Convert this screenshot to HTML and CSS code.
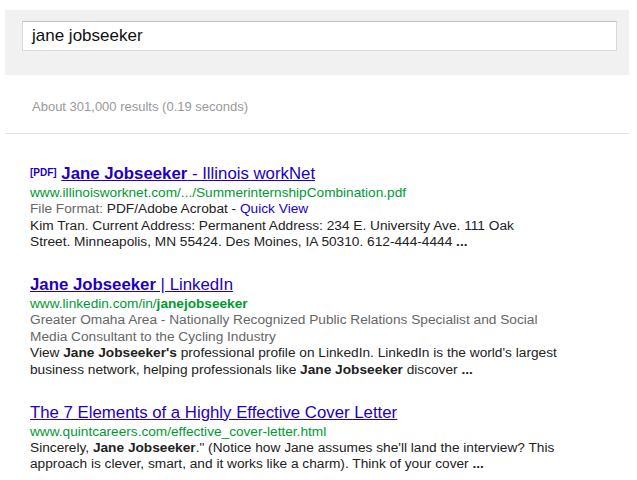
FILE: index.html
```html
<!DOCTYPE html>
<html>
<head>
<meta charset="utf-8">
<link rel="stylesheet" href="styles.css">
</head>
<body>
<div class="page">
  <div class="searchband">
    <div class="searchbox">jane jobseeker</div>
  </div>
  <div class="stats">About 301,000 results (0.19 seconds)</div>
  <div class="results">
    <div class="result">
      <div class="title"><span class="tag">[PDF]</span> <a href="#"><b>Jane Jobseeker</b> - Illinois workNet</a></div>
      <div class="url">www.illinoisworknet.com/.../SummerinternshipCombination.pdf</div>
      <div class="line"><span class="gray">File Format:</span> PDF/Adobe Acrobat - <a class="qv" href="#">Quick View</a></div>
      <div class="snippet">Kim Tran. Current Address: Permanent Address: 234 E. University Ave. 111 Oak<br>Street. Minneapolis, MN 55424. Des Moines, IA 50310. 612-444-4444 <b>...</b></div>
    </div>
    <div class="result">
      <div class="title"><a href="#"><b>Jane Jobseeker</b> | LinkedIn</a></div>
      <div class="url">www.linkedin.com/in/<b>janejobseeker</b></div>
      <div class="line gray">Greater Omaha Area - Nationally Recognized Public Relations Specialist and Social<br>Media Consultant to the Cycling Industry</div>
      <div class="snippet">View <b>Jane Jobseeker's</b> professional profile on LinkedIn. LinkedIn is the world's largest<br>business network, helping professionals like <b>Jane Jobseeker</b> discover <b>...</b></div>
    </div>
    <div class="result">
      <div class="title"><a href="#">The 7 Elements of a Highly Effective Cover Letter</a></div>
      <div class="url">www.quintcareers.com/effective_cover-letter.html</div>
      <div class="snippet">Sincerely, <b>Jane Jobseeker</b>." (Notice how Jane assumes she'll land the interview? This<br>approach is clever, smart, and it works like a charm). Think of your cover <b>...</b></div>
    </div>
  </div>
</div>
</body>
</html>
```

FILE: styles.css
```css
html, body {
  margin: 0;
  padding: 0;
  background: #ffffff;
}
body {
  font-family: "Liberation Sans", Arial, sans-serif;
  color: #222222;
}
.page {
  width: 637px;
  height: 480px;
  overflow: hidden;
}
.searchband {
  margin: 10px 8px 0 5px;
  height: 65px;
  background: #f1f1f1;
  padding: 11px 12px 0 17px;
  box-sizing: border-box;
}
.searchbox {
  height: 30px;
  box-sizing: border-box;
  background: #ffffff;
  border: 1px solid #d9d9d9;
  border-top-color: #c0c0c0;
  font-size: 17px;
  line-height: 28px;
  padding-left: 9px;
  color: #111111;
}
.stats {
  margin: 0 8px 0 5px;
  padding: 24px 0 0 27px;
  height: 59px;
  box-sizing: border-box;
  font-size: 13px;
  line-height: 16px;
  color: #999999;
  border-bottom: 1px solid #e2e2e2;
}
.results {
  padding: 29px 0 0 30px;
  width: 600px;
}
.result {
  margin-bottom: 24.5px;
}
.title {
  font-size: 16.8px;
  line-height: 20px;
  white-space: nowrap;
}
.title a {
  color: #2200c1;
  text-decoration: underline;
}
.tag {
  font-size: 10px;
  font-weight: bold;
  color: #2200c1;
  vertical-align: 3px;
}
.url {
  font-size: 13.65px;
  line-height: 17px;
  color: #009933;
  white-space: nowrap;
}
.line, .snippet {
  font-size: 13.7px;
  line-height: 16.5px;
  color: #222222;
  white-space: nowrap;
}
.gray {
  color: #666666;
}
.qv {
  color: #2200c1;
  text-decoration: none;
}
```
